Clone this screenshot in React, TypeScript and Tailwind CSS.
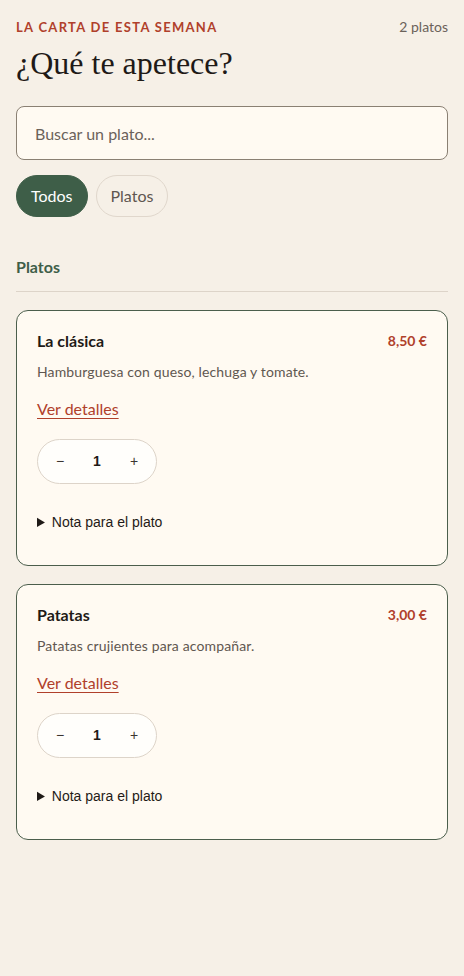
import React, { useState } from "react"

const dishes = [
  { id: 1, name: "La clásica", price: "8,50 €", desc: "Hamburguesa con queso, lechuga y tomate." },
  { id: 2, name: "Patatas", price: "3,00 €", desc: "Patatas crujientes para acompañar." },
]

function DishCard({ dish }: { dish: (typeof dishes)[number] }) {
  const [qty, setQty] = useState(1)
  return (
    <article className="rounded-[12px] border border-[#4b5e4c] bg-[#fffaf2] px-5 pt-5 pb-[33px]">
      <div className="flex items-center justify-between">
        <h3 className="text-[16px] leading-5 font-bold text-[#1f1a17]">{dish.name}</h3>
        <span className="text-[14px] leading-5 font-bold text-[#b0402b]">{dish.price}</span>
      </div>
      <p className="mt-[11px] text-[14px] leading-5 tracking-[0.01em] text-[#5f5750]">{dish.desc}</p>
      <a href="#" className="mt-[15px] inline-block text-[16px] leading-6 text-[#b0402b] underline decoration-1 underline-offset-[3px]">
        Ver detalles
      </a>
      <div className="mt-[18px] flex h-[45px] w-[120px] items-center rounded-full border border-[#ddd4c9] bg-[#fffefb] font-['Liberation_Sans',sans-serif]">
        <button className="flex h-full w-[44px] items-center justify-center text-[14px] text-[#3b3531]" onClick={() => setQty(Math.max(0, qty - 1))}>
          −
        </button>
        <span className="flex-1 text-center text-[14px] font-bold text-[#1f1a17]">{qty}</span>
        <button className="flex h-full w-[44px] items-center justify-center text-[14px] text-[#3b3531]" onClick={() => setQty(qty + 1)}>
          +
        </button>
      </div>
      <details className="mt-[28px] font-['Liberation_Sans',sans-serif] text-[14px] leading-5 text-[#1f1a17]">
        <summary className="cursor-pointer">Nota para el plato</summary>
      </details>
    </article>
  )
}

export default function App() {
  const [filter, setFilter] = useState("Todos")
  return (
    <div className="min-h-[976px] bg-[#f6f0e7] px-4 pt-[17px] font-['Lato',sans-serif]">
      <div className="flex items-center justify-between">
        <span className="text-[13px] leading-[18px] font-bold tracking-[0.1em] text-[#b0402b]">LA CARTA DE ESTA SEMANA</span>
        <span className="text-[14px] leading-5 text-[#6b625a]">2 platos</span>
      </div>
      <h1 className="mt-[7px] font-['Liberation_Serif',serif] text-[32px] leading-[38px] text-[#1f1a17]">¿Qué te apetece?</h1>

      <input
        type="text"
        placeholder="Buscar un plato..."
        className="mt-[24px] block h-[54px] w-full rounded-[8px] border border-[#8a8073] bg-[#fffaf2] px-[18px] text-[16px] text-[#1f1a17] placeholder:text-[#6b625a] outline-none"
      />

      <div className="mt-[15px] flex gap-2">
        {["Todos", "Platos"].map((f) => (
          <button
            key={f}
            onClick={() => setFilter(f)}
            className={
              f === filter
                ? "h-[42px] rounded-full border border-[#3e5e48] bg-[#3e5e48] px-[14px] text-[16px] text-white"
                : "h-[42px] rounded-full border border-[#e0d7cc] bg-transparent px-[14px] text-[16px] text-[#5f5750]"
            }
          >
            {f}
          </button>
        ))}
      </div>

      <h2 className="mt-[38px] text-[16px] leading-6 font-bold text-[#3e5e48]">Platos</h2>
      <div className="mt-[12px] h-px bg-[#ddd4c9]" />

      <div className="mt-[18px] flex flex-col gap-[18px]">
        {dishes.map((d) => (
          <DishCard key={d.id} dish={d} />
        ))}
      </div>
    </div>
  )
}
